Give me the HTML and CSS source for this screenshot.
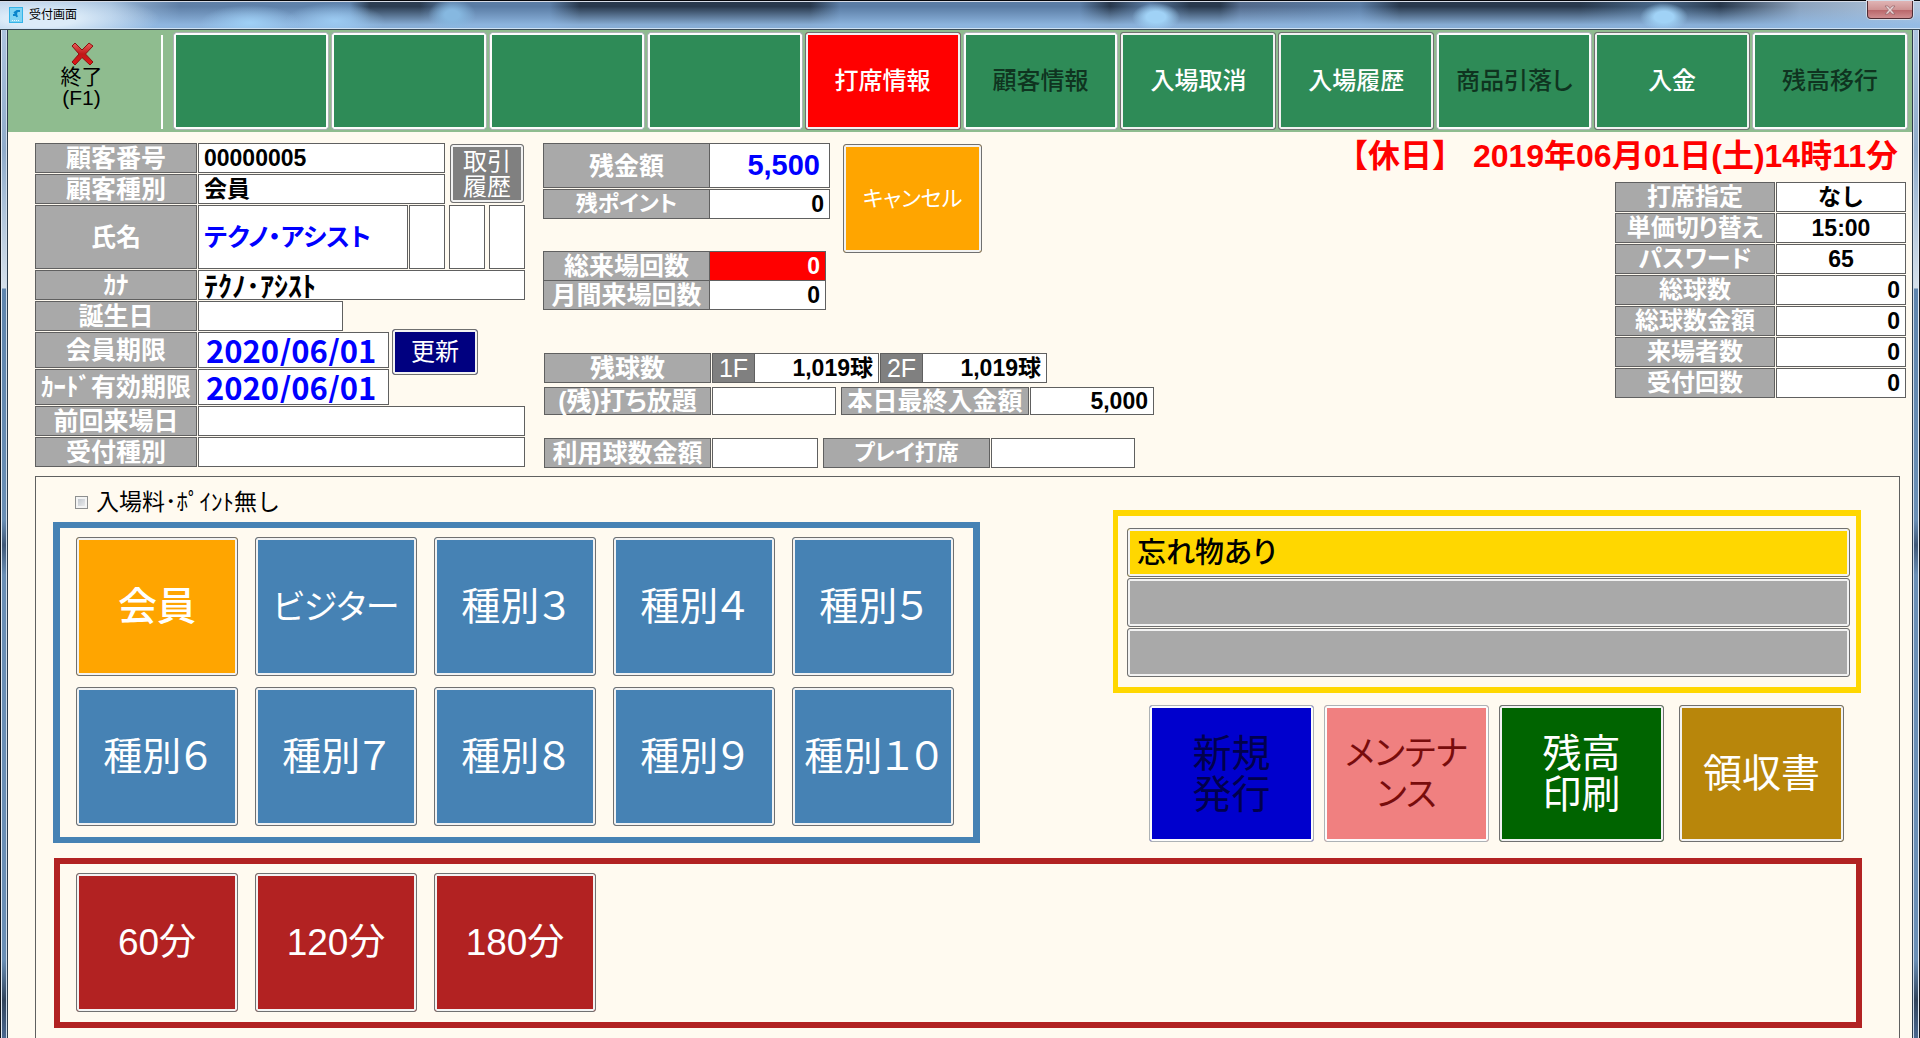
FILE: index.html
```html
<!DOCTYPE html>
<html lang="ja">
<head>
<meta charset="utf-8">
<title>受付画面</title>
<link rel="stylesheet" href="styles.css">
</head>
<body>
<div class="window">
  <header class="titlebar">
    <svg class="app-icon" viewBox="0 0 14 16" aria-hidden="true">
      <rect width="14" height="16" fill="#35b4e8"/>
      <rect x="1" y="1" width="12" height="14" fill="#7fd4f4"/>
      <path d="M11 4H8L5 6M8 5L6 8L4 8M7 7L8 10" fill="none" stroke="#0a86cc" stroke-width="2"/>
      <path d="M3 13.500h8" stroke="#e8f8ff" stroke-dasharray="1 1"/>
    </svg>
    <h1 class="title">受付画面</h1>
    <button class="close" type="button" aria-label="閉じる">
      <svg viewBox="0 0 12 10" aria-hidden="true"><path d="M1 1h3l2 2.500 2-2.500h3l-3.500 4 3.500 4h-3l-2-2.500-2 2.500h-3l3.500-4z" fill="#e6d2d4" stroke="#8a5a60" stroke-width=".6"/></svg>
    </button>
  </header>

  <nav class="toolbar">
    <button class="exit" type="button">
      <svg viewBox="0 0 24 24" aria-hidden="true">
        <defs><linearGradient id="red" x1="0" y1="0" x2="0" y2="1"><stop offset="0" stop-color="#e8605c"/><stop offset=".5" stop-color="#c01818"/><stop offset="1" stop-color="#e01818"/></linearGradient></defs>
        <path d="M2 4L5 1L12 8L19 1L23 4L15.500 12L23 20L20 23L12 15.500L5 23L2 20L9 12Z" fill="url(#red)" stroke="#8c1010" stroke-width="1" stroke-linejoin="round"/>
      </svg>
      <span>終了<br>(F1)</span>
    </button>
    <div class="tools">
      <button class="btn tool" type="button" disabled></button>
      <button class="btn tool" type="button" disabled></button>
      <button class="btn tool" type="button" disabled></button>
      <button class="btn tool" type="button" disabled></button>
      <button class="btn tool active" type="button">打席情報</button>
      <button class="btn tool" type="button" disabled>顧客情報</button>
      <button class="btn tool" type="button">入場取消</button>
      <button class="btn tool" type="button">入場履歴</button>
      <button class="btn tool" type="button" disabled>商品引落し</button>
      <button class="btn tool" type="button">入金</button>
      <button class="btn tool" type="button" disabled>残高移行</button>
    </div>
  </nav>

  <main class="content">
    <div class="summary">
      <section class="customer">
        <div class="group">
          <div class="stack short">
            <div class="row"><label for="no">顧客番号</label><input id="no" value="00000005" readonly></div>
            <div class="row"><label for="kind">顧客種別</label><input id="kind" value="会員" readonly></div>
          </div>
          <button class="btn history" type="button">取引<br>履歴</button>
        </div>
        <div class="row tall">
          <label for="name">氏名</label><input id="name" class="name" value="テクノ・アシスト" readonly>
          <div class="marks">
            <input class="mark" aria-label="区分1" readonly>
            <input class="mark" aria-label="区分2" readonly>
            <input class="mark" aria-label="区分3" readonly>
          </div>
        </div>
        <div class="row"><label for="kana">ｶﾅ</label><input id="kana" class="kana" value="ﾃｸﾉ･ｱｼｽﾄ" readonly></div>
        <div class="group">
          <div class="stack dates">
            <div class="row birth"><label for="birth">誕生日</label><input id="birth" readonly></div>
            <div class="row date"><label for="limit">会員期限</label><input id="limit" value="2020/06/01" readonly></div>
            <div class="row date"><label for="card">ｶｰﾄﾞ有効期限</label><input id="card" value="2020/06/01" readonly></div>
          </div>
          <button class="btn update" type="button">更新</button>
        </div>
        <div class="row"><label for="last">前回来場日</label><input id="last" readonly></div>
        <div class="row"><label for="recept">受付種別</label><input id="recept" readonly></div>
      </section>

      <section class="account">
        <div class="balances">
          <div class="stack">
            <div class="row joined balance"><label for="bal">残金額</label><input id="bal" value="5,500" readonly></div>
            <div class="row joined point"><label for="pt" class="narrow">残ポイント</label><input id="pt" value="0" readonly></div>
            <div class="row joined visits total"><label for="tv">総来場回数</label><input id="tv" value="0" readonly></div>
            <div class="row joined visits month"><label for="mv">月間来場回数</label><input id="mv" value="0" readonly></div>
          </div>
          <button class="btn cancel" type="button">キャンセル</button>
        </div>
        <div class="details">
          <div class="row balls">
            <span class="label">残球数</span>
            <div class="floor"><label for="f1">1F</label><input id="f1" value="1,019球" readonly></div>
            <div class="floor"><label for="f2">2F</label><input id="f2" value="1,019球" readonly></div>
          </div>
          <div class="pairs plan">
            <div class="row"><label for="free">(残)打ち放題</label><input id="free" class="w-free" readonly></div>
            <div class="row"><label for="dep" class="w-dep">本日最終入金額</label><input id="dep" class="w-free" value="5,000" readonly></div>
          </div>
          <div class="pairs play">
            <div class="row"><label for="use">利用球数金額</label><input id="use" class="w-use" readonly></div>
            <div class="row"><label for="seat" class="narrow">プレイ打席</label><input id="seat" class="w-seat" readonly></div>
          </div>
        </div>
      </section>

      <section class="status">
        <p class="clock">【休日】 2019年06月01日(土)14時11分</p>
        <div class="stack facts">
          <div class="row center"><label for="s1">打席指定</label><input id="s1" value="なし" readonly></div>
          <div class="row center"><label for="s2">単価切り替え</label><input id="s2" value="15:00" readonly></div>
          <div class="row center"><label for="s3">パスワード</label><input id="s3" value="65" readonly></div>
          <div class="row"><label for="s4">総球数</label><input id="s4" value="0" readonly></div>
          <div class="row"><label for="s5">総球数金額</label><input id="s5" value="0" readonly></div>
          <div class="row"><label for="s6">来場者数</label><input id="s6" value="0" readonly></div>
          <div class="row"><label for="s7">受付回数</label><input id="s7" value="0" readonly></div>
        </div>
      </section>
    </div>

    <section class="panel">
      <label class="nofee"><input type="checkbox"><span>入場料･ﾎﾟｲﾝﾄ無し</span></label>
      <div class="choices">
        <div class="frame kinds">
          <button class="btn tile chosen" type="button">会員</button>
          <button class="btn tile katakana" type="button">ビジター</button>
          <button class="btn tile" type="button">種別３</button>
          <button class="btn tile" type="button">種別４</button>
          <button class="btn tile" type="button">種別５</button>
          <button class="btn tile" type="button">種別６</button>
          <button class="btn tile" type="button">種別７</button>
          <button class="btn tile" type="button">種別８</button>
          <button class="btn tile" type="button">種別９</button>
          <button class="btn tile" type="button">種別１０</button>
        </div>
        <div class="side">
          <div class="frame notices">
            <button class="btn notice lit" type="button">忘れ物あり</button>
            <button class="btn notice" type="button"></button>
            <button class="btn notice" type="button"></button>
          </div>
          <div class="actions">
            <button class="btn action issue" type="button" disabled>新規<br>発行</button>
            <button class="btn action maint katakana" type="button" disabled>メンテナ<br>ンス</button>
            <button class="btn action print" type="button">残高<br>印刷</button>
            <button class="btn action receipt" type="button">領収書</button>
          </div>
        </div>
      </div>
      <div class="frame times">
        <button class="btn tile" type="button">60分</button>
        <button class="btn tile" type="button">120分</button>
        <button class="btn tile" type="button">180分</button>
      </div>
    </section>
  </main>
</div>
</body>
</html>
```
FILE: styles.css
```css
* { box-sizing: border-box; }

body {
  margin: 0;
  font-family: "Liberation Sans", "Noto Sans CJK JP", sans-serif;
  color: #000;
  background: #fffaf0;
}

button, input { font: inherit; color: inherit; margin: 0; }

.window {
  min-height: 100vh;
  display: flex;
  flex-direction: column;
  padding: 0 8px;
  background:
    linear-gradient(90deg, #14161c 1px, #dfe8f2 1px 2px, transparent 2px 6px, #cfdcea 6px 7px, #2c3c4c 7px) left / 8px 100% no-repeat,
    linear-gradient(90deg, #2c3c4c 1px, #cfdcea 1px 2px, transparent 2px 6px, #dfe8f2 6px 7px, #14161c 7px) right / 8px 100% no-repeat,
    linear-gradient(#b4cae4 0, #8fabca 150px, #a9c0d8 200px, #d5e0ea 288px, #5f85ad 289px, #6a8fb5 520px, #3f5878 545px, #6a8fb5 575px, #6a8fb5 960px, #31445c 1000px, #4a6890 100%);
}

/* Title bar */
.titlebar {
  display: flex;
  align-items: flex-start;
  gap: 6px;
  height: 30px;
  margin: 0 -8px;
  padding: 0 7px 0 9px;
  border-top: 1px solid #05060a;
  border-bottom: 1px solid #3a4a56;
  box-shadow: inset 0 1px #d5dbe6, inset 0 -1px #cfe2f4;
  background:
    radial-gradient(ellipse 120px 26px at 40px 18px, #dcebf8 30%, transparent),
    radial-gradient(ellipse 50px 18px at 250px 22px, #9fd0f6, transparent),
    radial-gradient(ellipse 50px 18px at 335px 20px, #9ccbf2, transparent),
    radial-gradient(ellipse 24px 16px at 452px 14px, #86b8e0 30%, transparent),
    radial-gradient(ellipse 24px 14px at 1156px 16px, #a0d2f6 40%, transparent),
    radial-gradient(ellipse 24px 14px at 1664px 16px, #a0d2f6 40%, transparent),
    linear-gradient(transparent 20%, rgba(146, 186, 228, .9) 85%),
    linear-gradient(90deg, #b0c8e2 0, #9ab8d8 110px, #5f7fa6 180px, #5f83ac 350px, #2c3d52 370px, #2c3d52 420px, #5a7ca4 450px, #5a7ca4 550px, #28384c 580px, #28384c 810px, #5a7ca4 840px, #5a7ca4 1080px, #28384c 1110px, #5a7ca4 1150px, #28384c 1190px, #28384c 1220px, #52698a 1240px, #5a7ca4 1360px, #28384c 1400px, #28384c 1580px, #4a6a8c 1660px, #28384c 1720px, #8ca3be 1800px, #b4c8de 100%);
}
.app-icon { width: 14px; height: 16px; margin-top: 6px; }
.title { margin: 6px 0 0; font-size: 12px; line-height: 16px; font-weight: 400; }
.close {
  width: 46px;
  height: 18px;
  margin-left: auto;
  padding: 0;
  display: flex;
  align-items: center;
  justify-content: center;
  border: 1px solid #4e2c34;
  border-top: 0;
  border-radius: 0 0 4px 4px;
  background: linear-gradient(#e0b4b4, #cf9494 50%, #b86468 51%, #cf8e90);
  box-shadow: 0 0 0 1px #d5dde8;
}
.close svg { width: 12px; height: 10px; }

/* Shared push button */
.btn {
  padding: 0;
  border: 1px solid #707070;
  border-radius: 3px;
  box-shadow: inset 0 0 0 2px #f2f2f2;
  line-height: 28px;
  font-feature-settings: "palt";
}
.btn:disabled { border-color: #adb2b5; box-shadow: inset 0 0 0 2px #fcfcfc; }

/* Toolbar */
.toolbar {
  display: flex;
  height: 102px;
  padding: 2px 4px 2px 0;
  background: #8fbc8f;
}
.exit {
  width: 155px;
  margin: 3px 10px 1px 0;
  padding: 7px 6px 0 0;
  display: flex;
  flex-direction: column;
  align-items: center;
  border: 0;
  border-right: 2px solid #fff;
  background: none;
  font-size: 21px;
  line-height: 21px;
}
.exit svg { width: 24px; height: 24px; }
.tools {
  flex: 1;
  display: grid;
  grid-template-columns: repeat(11, 1fr);
  gap: 2px;
}
.tool { background: #2e8b57; color: #fff; font-size: 24px; font-weight: 500; }
.tool:disabled { color: #0f3420; }
.tool.active { background: #f00; }

/* Work area */
.content {
  flex: 1;
  display: flex;
  flex-direction: column;
  background: #fffaf0;
}
.summary { display: flex; align-items: flex-start; padding: 11px 6px 0 27px; }

.stack { display: flex; flex-direction: column; gap: 1px; }
.group { display: flex; align-items: flex-start; }
.row { display: flex; gap: 1px; height: 30px; }

.row label, .label {
  flex: none;
  width: 167px;
  display: flex;
  align-items: center;
  justify-content: center;
  border: 1px solid #606060;
  background: #a9a9a9;
  color: #fff;
  font-size: 25px;
  font-weight: 700;
  line-height: 28px;
  white-space: nowrap;
  font-feature-settings: "palt";
}
.row .narrow { font-size: 22px; }
.row input {
  min-width: 0;
  flex: 1;
  padding: 0 5px;
  border: 1px solid #606060;
  border-radius: 0;
  background: #fff;
  font-size: 23px;
  font-weight: 700;
  line-height: 26px;
}

/* Customer form */
.customer { width: 490px; display: flex; flex-direction: column; gap: 1px; }
.customer .row label { width: 162px; }
.customer .short { width: 410px; }
.history {
  width: 74px;
  height: 59px;
  margin: 1px 0 0 5px;
  background: #808080;
  color: #fff;
  font-size: 24px;
  line-height: 25px;
}
.customer .tall { height: 64px; }
.row .name { color: #00f; font-size: 25px; font-feature-settings: "palt"; }
.marks { display: grid; grid-template-columns: repeat(3, 36px); gap: 4px; }
.row .kana { font-size: 28px; }
.customer .dates { width: 354px; }
.customer .birth { width: 308px; }
.customer .date { height: 36px; }
.date input {
  padding: 0 7px;
  color: #00f;
  font-family: "Noto Sans CJK JP", sans-serif;
  font-size: 31px;
  line-height: 32px;
}
.update {
  width: 86px;
  height: 46px;
  margin: 28px 0 0 3px;
  background: #000080;
  color: #fff;
  font-size: 24px;
}

/* Account figures */
.account { margin-left: 18px; }
.account input, .facts input { text-align: right; }
.balances { display: flex; align-items: flex-start; gap: 13px; }
.balances .row { width: 287px; gap: 0; }
.joined input { border-left: 0; }
.account .balance { height: 45px; }
.balance input { color: #00f; font-size: 29px; padding: 0 9px; }
.balances .visits { width: 283px; }
.account .total { margin-top: 31px; }
.total input { background: #f00; color: #fff; }
.account .month { margin-top: -2px; }
.cancel {
  width: 139px;
  height: 109px;
  margin-top: 1px;
  background: #ffa500;
  color: #fff;
  font-size: 22px;
}
.details { margin: 43px 0 0 1px; }
.floor { display: flex; }
.floor label { width: 43px; background: #808080; font-weight: 500; }
.floor input { flex: none; width: 124px; border-left: 0; }
.pairs { display: flex; gap: 5px; }
.pairs input { flex: none; }
.plan { margin-top: 4px; }
.plan .row { height: 28px; }
.plan .w-dep { width: 188px; }
.w-free { width: 124px; }
.play { margin-top: 23px; }
.w-use { width: 106px; }
.w-seat { width: 144px; }

/* Clock and day's figures */
.status {
  flex: 1;
  display: flex;
  flex-direction: column;
  align-items: flex-end;
}
.clock {
  margin: -6px 8px 0 0;
  color: #f00;
  font-size: 32px;
  font-weight: 700;
  line-height: 38px;
  padding-bottom: 7px;
  white-space: nowrap;
}
.facts { width: 291px; }
.facts .row label { width: 160px; font-size: 24px; }
.facts .center input { text-align: center; }

/* Reception panel */
.panel {
  flex: 1;
  margin: 8px 12px 0 27px;
  padding: 10px 38px 10px 17px;
  border: 1px solid #606060;
  border-bottom: 0;
}
.nofee {
  display: flex;
  align-items: center;
  gap: 8px;
  width: max-content;
  height: 30px;
  margin-left: 22px;
  font-size: 23px;
  line-height: 30px;
}
.nofee input {
  appearance: none;
  width: 13px;
  height: 13px;
  border: 1px solid #8e8f8f;
  background: linear-gradient(135deg, #b8bec6, #f4f4f4);
  box-shadow: inset 0 0 0 2px #f4f4f4;
}
.choices { display: flex; align-items: flex-start; justify-content: space-between; }
.frame { border: 6px solid; }
.kinds {
  display: grid;
  grid-template-columns: repeat(5, 162px);
  gap: 11px 17px;
  margin-top: 5px;
  padding: 9px 19px 11px 16px;
  border-width: 6px 7px;
  border-color: #4682b4;
}
.tile {
  width: 162px;
  height: 139px;
  color: #fff;
  font-size: 39px;
  line-height: 48px;
  background: #4682b4;
}
.tile.chosen { background: #ffa500; font-weight: 500; }

.notices {
  width: 748px;
  margin-top: -7px;
  padding: 12px 6px 10px 9px;
  display: flex;
  flex-direction: column;
  gap: 1px;
  border-width: 6px 5px;
  border-color: #ffd700;
}
.notice {
  height: 49px;
  padding: 0 9px;
  background: #a9a9a9;
  text-align: left;
  font-size: 29px;
  font-weight: 500;
}
.notice.lit { background: #ffd700; }
.actions { display: flex; gap: 10px; padding: 12px 17px 0 36px; }
.action { width: 165px; height: 137px; color: #fff; font-size: 39px; line-height: 41px; }
.katakana { font-size: 34px; }
.issue { background: #0000cd; }
.issue:disabled { color: #00004d; }
.maint { background: #f08080; }
.maint:disabled { color: #780c0c; }
.print { background: #006400; }
.receipt { margin-left: auto; background: #b8860b; }

.times {
  display: flex;
  gap: 17px;
  margin: 15px -1px 0 1px;
  padding: 9px 16px 10px;
  border-color: #b22222;
}
.times .tile { background: #b22222; font-size: 37px; }
```
